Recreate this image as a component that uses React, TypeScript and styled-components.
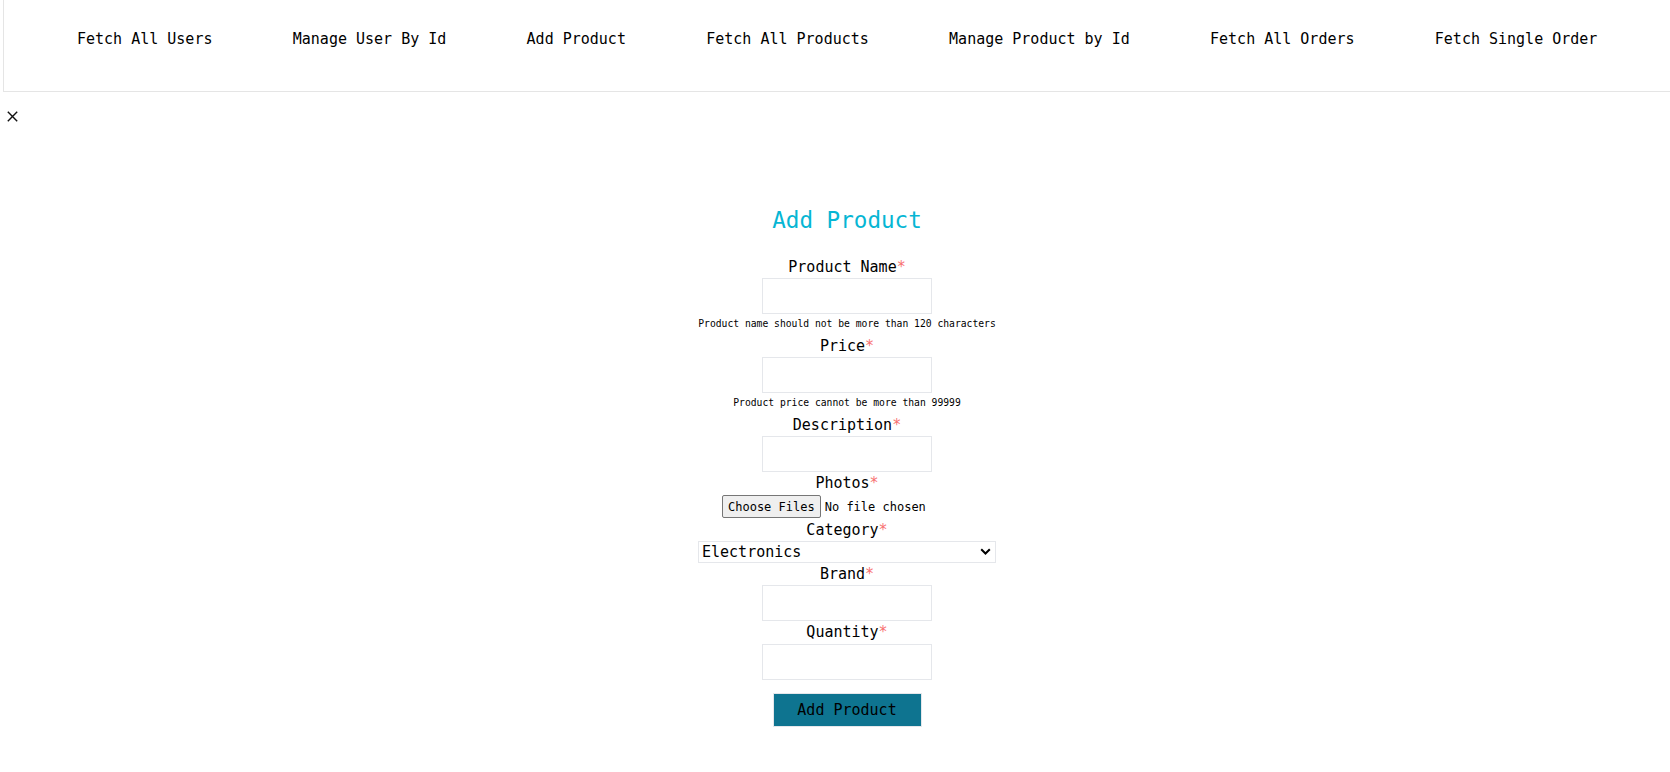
import React from "react";
import styled, { createGlobalStyle } from "styled-components";

const GlobalStyle = createGlobalStyle`
  html, body {
    margin: 0;
    padding: 0;
    background: #ffffff;
  }
  body {
    font-family: "DejaVu Sans Mono", "Liberation Mono", monospace;
    color: #000000;
  }
  * { box-sizing: border-box; }
`;

const NavBar = styled.nav`
  display: flex;
  align-items: flex-start;
  gap: 80.3px;
  margin-left: 3px;
  padding: 30px 0 43px 73px;
  border-left: 1px solid #e5e5e5;
  border-bottom: 1px solid #e5e5e5;
`;

const NavItem = styled.a`
  font-size: 15px;
  line-height: 18px;
  color: #000;
  text-decoration: none;
  white-space: nowrap;
  cursor: pointer;
`;

const CloseButton = styled.button`
  display: block;
  margin: 19px 0 0 7px;
  padding: 0;
  border: none;
  background: none;
  width: 11px;
  height: 11px;
  cursor: pointer;
  svg { display: block; }
`;

const Main = styled.main`
  display: flex;
  justify-content: center;
  padding: 81px 0 0 24px;
`;

const Form = styled.form`
  display: flex;
  flex-direction: column;
  align-items: center;
  width: 298px;
`;

const Title = styled.h2`
  margin: 0 0 18.7px;
  font-size: 22.6px;
  line-height: 34px;
  font-weight: 400;
  color: #06b6d4;
`;

const Label = styled.label`
  display: block;
  font-size: 15px;
  line-height: 22.5px;
  white-space: nowrap;
`;

const Required = styled.span`
  color: #f87171;
`;

const TextInput = styled.input`
  display: block;
  width: 170px;
  height: 36px;
  border: 1px solid #e5e7eb;
  padding: 0 6px;
  font: inherit;
  font-size: 15px;
  outline: none;
`;

const Hint = styled.p`
  margin: 0;
  font-size: 9.7px;
  line-height: 20.5px;
  white-space: nowrap;
`;

const FileRow = styled.div`
  display: flex;
  align-items: center;
  height: 24px;
`;

const FileInput = styled.input`
  width: 250px;
  font-family: "DejaVu Sans Mono", "Liberation Mono", monospace;
  font-size: 12px;
  color: #000;
  &::file-selector-button {
    font: inherit;
    height: 23.5px;
    padding: 0 5px;
    margin-right: 4px;
    border: 1px solid #767676;
    border-radius: 2px;
    background: #efefef;
    color: #000;
  }
`;

const SelectWrap = styled.div`
  position: relative;
  width: 100%;
  height: 21.5px;
`;

const Select = styled.select`
  appearance: none;
  display: block;
  width: 100%;
  height: 100%;
  margin: 0;
  padding: 0 20px 0 3px;
  border: 1px solid #e5e7eb;
  border-radius: 0;
  background: #fff;
  font-family: "DejaVu Sans Mono", "Liberation Mono", monospace;
  font-size: 15px;
  color: #000;
  outline: none;
`;

const Chevron = styled.svg`
  position: absolute;
  right: 5px;
  top: 7px;
  pointer-events: none;
`;

const SubmitButton = styled.button`
  margin-top: 13.5px;
  width: 149px;
  height: 34px;
  border: 1px solid #e5e7eb;
  background: #0e7490;
  color: #000;
  font-family: "DejaVu Sans Mono", "Liberation Mono", monospace;
  font-size: 15px;
  cursor: pointer;
`;

const navLinks = [
  "Fetch All Users",
  "Manage User By Id",
  "Add Product",
  "Fetch All Products",
  "Manage Product by Id",
  "Fetch All Orders",
  "Fetch Single Order",
];

type FieldProps = { label: string; hint?: string };

const Field: React.FC<FieldProps> = ({ label, hint }) => (
  <>
    <Label>
      {label}
      <Required>*</Required>
    </Label>
    <TextInput type="text" />
    {hint && <Hint>{hint}</Hint>}
  </>
);

export default function App() {
  return (
    <>
      <GlobalStyle />
      <NavBar>
        {navLinks.map((l) => (
          <NavItem key={l}>{l}</NavItem>
        ))}
      </NavBar>
      <CloseButton type="button" aria-label="close">
        <svg width="11" height="11" viewBox="0 0 11 11">
          <path d="M0.8 0.8 L10.2 10.2 M10.2 0.8 L0.8 10.2" stroke="#111" strokeWidth="1.4" fill="none" />
        </svg>
      </CloseButton>
      <Main>
        <Form onSubmit={(e) => e.preventDefault()}>
          <Title>Add Product</Title>
          <Field label="Product Name" hint="Product name should not be more than 120 characters" />
          <Field label="Price" hint="Product price cannot be more than 99999" />
          <Field label="Description" />
          <Label>
            Photos<Required>*</Required>
          </Label>
          <FileRow>
            <FileInput type="file" multiple />
          </FileRow>
          <Label>
            Category<Required>*</Required>
          </Label>
          <SelectWrap>
            <Select defaultValue="Electronics">
              <option>Electronics</option>
              <option>Clothing</option>
              <option>Books</option>
              <option>Home</option>
            </Select>
            <Chevron width="11" height="7" viewBox="0 0 11 7">
              <path d="M1.2 1.2 L5.5 5.5 L9.8 1.2" stroke="#000" strokeWidth="2" fill="none" />
            </Chevron>
          </SelectWrap>
          <Field label="Brand" />
          <Field label="Quantity" />
          <SubmitButton type="submit">Add Product</SubmitButton>
        </Form>
      </Main>
    </>
  );
}
